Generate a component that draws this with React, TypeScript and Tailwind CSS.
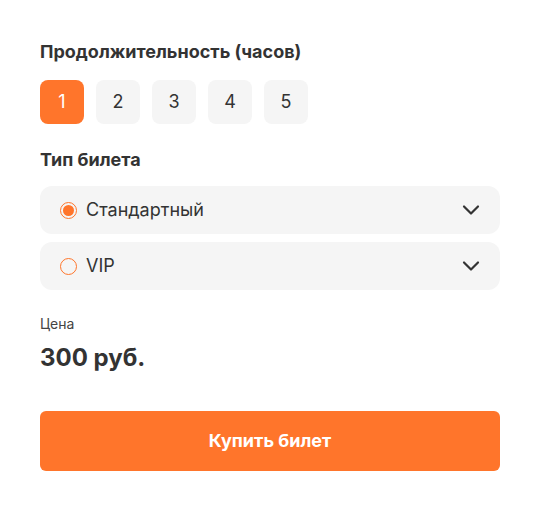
import { useState } from "react";

const hours = [1, 2, 3, 4, 5];

const tickets = [
  { id: "standard", label: "Стандартный" },
  { id: "vip", label: "VIP" },
];

function Chevron() {
  return (
    <svg width="18" height="12" viewBox="0 0 18 12" fill="none">
      <path
        d="M2 2.5l7 7 7-7"
        stroke="#333333"
        strokeWidth="2.2"
        strokeLinecap="round"
        strokeLinejoin="round"
      />
    </svg>
  );
}

export default function App() {
  const [hour, setHour] = useState(1);
  const [ticket, setTicket] = useState("standard");

  return (
    <main className="min-h-screen bg-white font-['Inter',sans-serif] text-[#333333]">
      <div className="mx-10 pt-10 pb-10">
        <h2 className="text-lg leading-6 font-bold">Продолжительность (часов)</h2>
        <div className="mt-4 flex gap-3">
          {hours.map((h) => (
            <button
              key={h}
              onClick={() => setHour(h)}
              className={
                h === hour
                  ? "w-11 h-11 rounded-lg bg-[#ff752b] text-white text-lg"
                  : "w-11 h-11 rounded-lg bg-[#f5f5f5] text-[#333333] text-lg"
              }
            >
              {h}
            </button>
          ))}
        </div>

        <h2 className="mt-6 text-lg leading-6 font-bold">Тип билета</h2>
        <div className="mt-3.5 flex flex-col gap-2">
          {tickets.map((t) => (
            <button
              key={t.id}
              onClick={() => setTicket(t.id)}
              className="h-12 rounded-xl bg-[#f5f5f5] flex items-center justify-between pl-5 pr-5"
            >
              <span className="flex items-center gap-[9px]">
                <span className="w-[17px] h-[17px] rounded-full border-[1.5px] border-[#ff752b] flex items-center justify-center">
                  {ticket === t.id && (
                    <span className="w-[11px] h-[11px] rounded-full bg-[#ff752b]" />
                  )}
                </span>
                <span className="text-lg leading-6">{t.label}</span>
              </span>
              <Chevron />
            </button>
          ))}
        </div>

        <p className="mt-6 text-sm leading-5 text-[#444444]">Цена</p>
        <p className="mt-2 text-2xl leading-8 font-bold">300 руб.</p>

        <button className="mt-[37px] w-full h-[60px] rounded-md bg-[#ff752b] text-white text-lg font-bold">
          Купить билет
        </button>
      </div>
    </main>
  );
}
